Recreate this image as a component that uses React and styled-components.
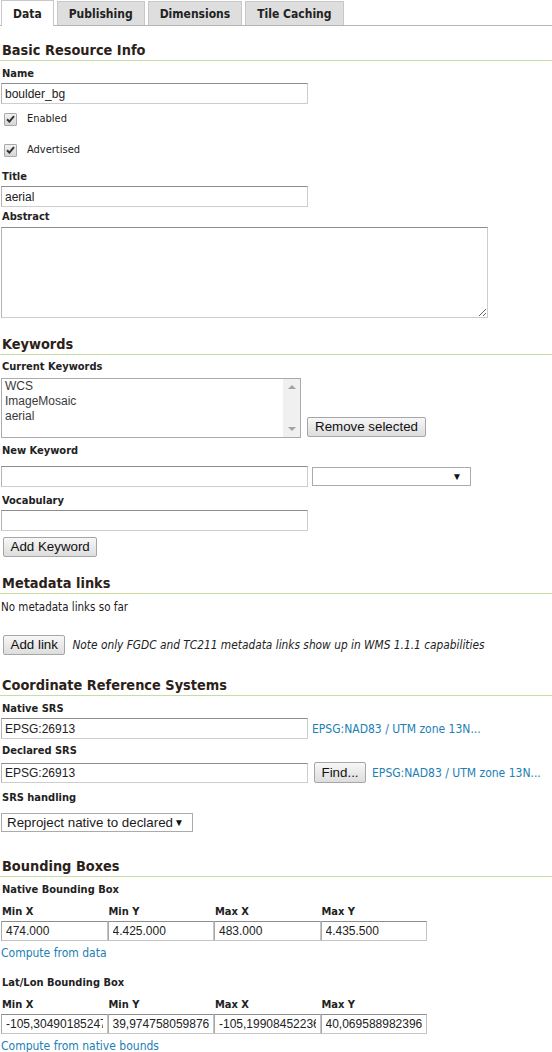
import React from "react";
import styled, { createGlobalStyle } from "styled-components";

const UI = `"DejaVu Sans Condensed", "DejaVu Sans", Tahoma, sans-serif`;
const ARIAL = `"Liberation Sans", Arial, sans-serif`;

const GlobalStyle = createGlobalStyle`
  html, body { margin: 0; padding: 0; background: #fff; }
  body { font-family: ${UI}; color: #222; }
  * { box-sizing: border-box; }
`;

const TabBar = styled.div`
  display: flex;
  align-items: flex-end;
  gap: 3px;
  height: 26px;
  padding-left: 1px;
  border-bottom: 1px solid #b5b5b5;
`;

const Tab = styled.div`
  display: flex;
  align-items: center;
  justify-content: center;
  height: ${(p) => (p.$active ? "26px" : "24px")};
  margin-bottom: ${(p) => (p.$active ? "-1px" : "0")};
  padding: ${(p) => (p.$active ? "1px" : "0")} 11px 0;
  border: 1px solid #c8c8c8;
  border-bottom: none;
  background: ${(p) => (p.$active ? "#fff" : "#dedede")};
  font: bold 12px ${UI};
  color: #222;
`;

const Page = styled.div`
  display: flex;
  flex-direction: column;
  align-items: flex-start;
  padding-left: 1px;
`;

const SectionTitle = styled.h2`
  align-self: stretch;
  margin: ${(p) => p.$mt || 0}px 0 0 -1px;
  padding: 0 0 0 2px;
  font: bold 14.4px/19px ${UI};
  color: #2b2118;
  border-bottom: 1px solid #c6df9e;
`;

const Label = styled.div`
  margin: ${(p) => p.$mt || 0}px 0 0 1px;
  font: bold 11px/14px ${UI};
  color: #222;
`;

const Text = styled.div`
  margin-top: ${(p) => p.$mt || 0}px;
  font: 11.5px/14px ${UI};
  color: #1e1a24;
`;

const TextInput = styled.input`
  display: block;
  width: ${(p) => p.$w || 307}px;
  height: ${(p) => p.$h || 21}px;
  margin: ${(p) => p.$mt || 0}px 0 0 0;
  padding: 0 3px;
  border: 1px solid #cdcdcd;
  border-top-color: #8c8c8c;
  border-left-color: #b4b4b4;
  background: #fff;
  font: 12px ${ARIAL};
  color: #222;
  outline: none;
`;

const TextArea = styled.textarea`
  display: block;
  width: 487px;
  height: 91px;
  margin-top: ${(p) => p.$mt || 0}px;
  border: 1px solid #cdcdcd;
  border-top-color: #8c8c8c;
  border-left-color: #b4b4b4;
  font: 12px ${ARIAL};
  outline: none;
`;

const CheckRow = styled.label`
  display: flex;
  align-items: center;
  gap: 10px;
  height: 16px;
  margin: ${(p) => p.$mt || 0}px 0 0 3px;
  font: 11px/16px ${UI};
  color: #222;
`;

const CheckBox = styled.span`
  display: inline-flex;
  align-items: center;
  justify-content: center;
  width: 13px;
  height: 13px;
  border: 1px solid #a9a9a9;
  border-radius: 1px;
  background: linear-gradient(#f2f2f2, #d6d6d6);
`;

const Row = styled.div`
  display: flex;
  align-items: ${(p) => p.$align || "center"};
  gap: ${(p) => p.$gap || 0}px;
  margin-top: ${(p) => p.$mt || 0}px;
`;

const ListBox = styled.div`
  display: flex;
  width: 300px;
  height: 60px;
  border: 1px solid #ababab;
  background: #fff;
`;

const ListItems = styled.div`
  flex: 1;
  padding: 0 3px;
  font: 12px/15px ${ARIAL};
  color: #3a3a3a;
`;

const ScrollTrack = styled.div`
  display: flex;
  flex-direction: column;
  justify-content: space-between;
  align-items: center;
  width: 17px;
  padding: 6px 0 6px;
  background: #f0f0f0;
`;

const Arrow = styled.span`
  width: 0;
  height: 0;
  border-left: 4px solid transparent;
  border-right: 4px solid transparent;
  ${(p) =>
    p.$up
      ? "border-bottom: 4px solid #a3a3a3;"
      : "border-top: 4px solid #a3a3a3;"}
`;

const Button = styled.button`
  height: ${(p) => p.$h || 21}px;
  margin: ${(p) => p.$mt || 0}px 0 ${(p) => p.$mb || 0}px ${(p) => p.$ml || 0}px;
  padding: 0 ${(p) => p.$px || 6.5}px;
  border: 1px solid #a6a6a6;
  border-radius: 2px;
  background: linear-gradient(#f7f7f7, #dddddd);
  font: 13.33px ${ARIAL};
  color: #111;
  line-height: 1;
`;

const FakeSelect = styled.div`
  display: flex;
  align-items: center;
  justify-content: space-between;
  width: ${(p) => p.$w}px;
  height: 19px;
  margin: ${(p) => p.$mt || 0}px 0 0 ${(p) => p.$ml || 0}px;
  padding: 0 8px 0 5px;
  border: 1px solid #ababab;
  background: #fff;
  font: 13.33px ${ARIAL};
  color: #1a1a1a;
`;

const Caret = styled.span`
  font-size: 10px;
  color: #111;
`;

const Link = styled.a`
  display: block;
  font: 12px/14px ${UI};
  color: #2180b4;
  text-decoration: none;
  margin: ${(p) => p.$mt || 0}px 0 0 ${(p) => p.$ml || 0}px;
`;

const Note = styled.span`
  font: italic 11.8px ${UI};
  color: #222;
`;

const BBoxGrid = styled.div`
  display: grid;
  grid-template-columns: repeat(4, 106.5px);
  margin-top: ${(p) => p.$mt || 0}px;
`;

const BBoxCell = styled.div`
  display: flex;
  flex-direction: column;
  gap: 2px;
`;

const BBoxLabel = styled.div`
  padding-left: 1px;
  font: bold 11px/14px ${UI};
  color: #222;
`;

const BBoxInput = styled.input`
  width: 106.5px;
  height: 20px;
  padding: 0 4px;
  border: 1px solid #c4c4c4;
  border-top-color: #8c8c8c;
  border-left-color: #a8a8a8;
  font: 12px ${ARIAL};
  color: #222;
  outline: none;
`;

function Check({ children, mt }) {
  return (
    <CheckRow $mt={mt}>
      <CheckBox>
        <svg width="9" height="8" viewBox="0 0 9 8">
          <path d="M1 4.2 L3.4 6.6 L8 1.2" fill="none" stroke="#333" strokeWidth="2" />
        </svg>
      </CheckBox>
      {children}
    </CheckRow>
  );
}

function BBox({ values, mt }) {
  const names = ["Min X", "Min Y", "Max X", "Max Y"];
  return (
    <BBoxGrid $mt={mt}>
      {names.map((n, i) => (
        <BBoxCell key={n}>
          <BBoxLabel>{n}</BBoxLabel>
          <BBoxInput defaultValue={values[i]} />
        </BBoxCell>
      ))}
    </BBoxGrid>
  );
}

export default function App() {
  return (
    <>
      <GlobalStyle />
      <TabBar>
        <Tab $active>Data</Tab>
        <Tab>Publishing</Tab>
        <Tab>Dimensions</Tab>
        <Tab>Tile Caching</Tab>
      </TabBar>
      <Page>
        <SectionTitle $mt={15}>Basic Resource Info</SectionTitle>
        <Label $mt={6}>Name</Label>
        <TextInput $mt={2} defaultValue="boulder_bg" />
        <Check mt={7}>Enabled</Check>
        <Check mt={15}>Advertised</Check>
        <Label $mt={12}>Title</Label>
        <TextInput $mt={2} defaultValue="aerial" />
        <Label $mt={3}>Abstract</Label>
        <TextArea $mt={3} />

        <SectionTitle $mt={17}>Keywords</SectionTitle>
        <Label $mt={5}>Current Keywords</Label>
        <Row $mt={4} $align="flex-end" $gap={6}>
          <ListBox>
            <ListItems>
              <div>WCS</div>
              <div>ImageMosaic</div>
              <div>aerial</div>
            </ListItems>
            <ScrollTrack>
              <Arrow $up />
              <Arrow />
            </ScrollTrack>
          </ListBox>
          <Button $h={20} $px={7} $mb={1}>Remove selected</Button>
        </Row>
        <Label $mt={6}>New Keyword</Label>
        <Row $mt={8} $gap={4}>
          <TextInput />
          <FakeSelect $w={159}>
            <span />
            <Caret>▼</Caret>
          </FakeSelect>
        </Row>
        <Label $mt={7}>Vocabulary</Label>
        <TextInput $mt={2} />
        <Button $mt={6} $ml={2} $h={20}>Add Keyword</Button>

        <SectionTitle $mt={17}>Metadata links</SectionTitle>
        <Text $mt={6}>No metadata links so far</Text>
        <Row $mt={21} $gap={7}>
          <Button $ml={2} $h={20}>Add link</Button>
          <Note>Note only FGDC and TC211 metadata links show up in WMS 1.1.1 capabilities</Note>
        </Row>

        <SectionTitle $mt={21}>Coordinate Reference Systems</SectionTitle>
        <Label $mt={6}>Native SRS</Label>
        <Row $mt={2} $gap={4}>
          <TextInput defaultValue="EPSG:26913" />
          <Link href="#">EPSG:NAD83 / UTM zone 13N...</Link>
        </Row>
        <Label $mt={5}>Declared SRS</Label>
        <Row $mt={4} $gap={6}>
          <TextInput $h={20} defaultValue="EPSG:26913" />
          <Button $h={21} $px={6.5}>Find...</Button>
          <Link href="#">EPSG:NAD83 / UTM zone 13N...</Link>
        </Row>
        <Label $mt={8}>SRS handling</Label>
        <FakeSelect $w={192} $mt={8}>
          <span>Reproject native to declared</span>
          <Caret>▼</Caret>
        </FakeSelect>

        <SectionTitle $mt={25}>Bounding Boxes</SectionTitle>
        <Label $mt={6}>Native Bounding Box</Label>
        <BBox mt={8} values={["474.000", "4.425.000", "483.000", "4.435.500"]} />
        <Link href="#" $mt={5}>Compute from data</Link>
        <Label $mt={16}>Lat/Lon Bounding Box</Label>
        <BBox
          mt={8}
          values={[
            "-105,30490185247",
            "39,974758059876428",
            "-105,19908452236",
            "40,069588982396928",
          ]}
        />
        <Link href="#" $mt={5}>Compute from native bounds</Link>
      </Page>
    </>
  );
}
